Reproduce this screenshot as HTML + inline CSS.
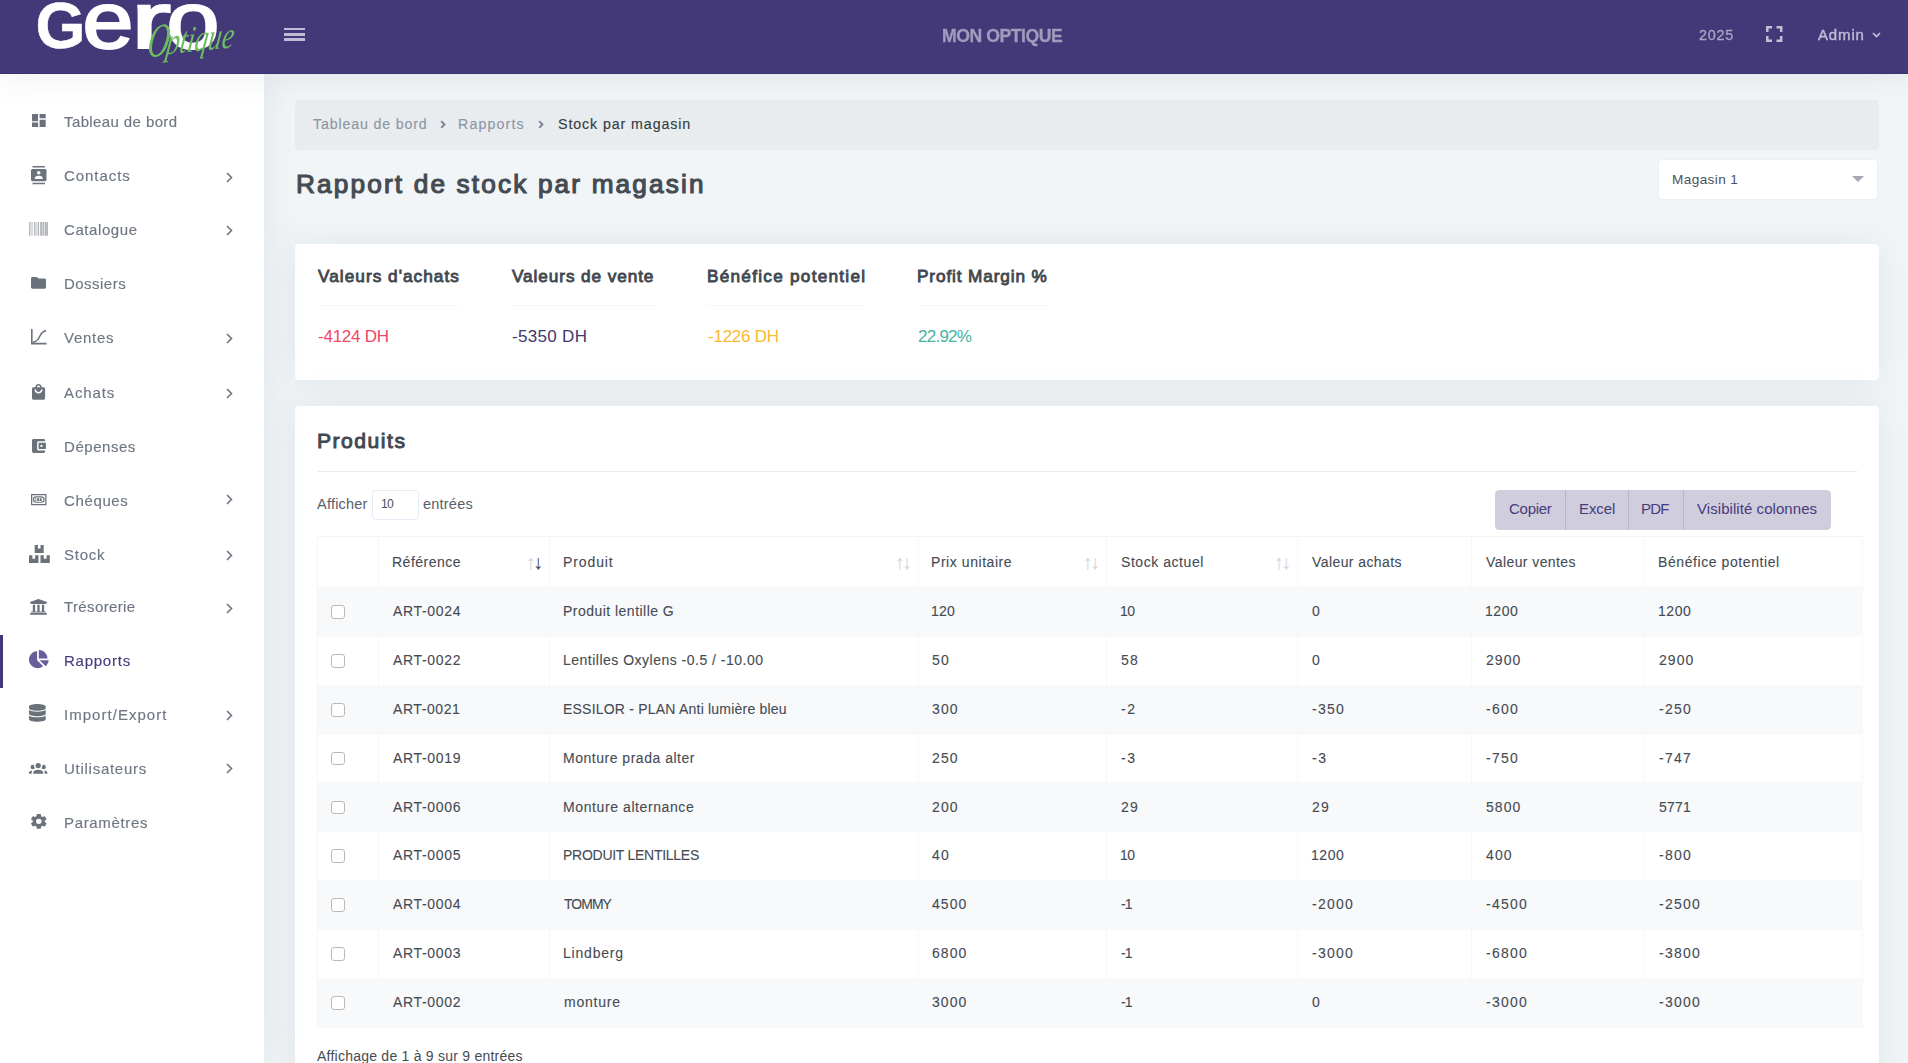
<!DOCTYPE html>
<html lang="fr"><head><meta charset="utf-8"><title>Rapport de stock par magasin</title>
<style>
*{box-sizing:border-box}
html,body{margin:0;padding:0}
body{width:1908px;height:1063px;overflow:hidden;background:#f1f5f7;font-family:"Liberation Sans",sans-serif;color:#495057;position:relative}
span{white-space:pre}
.t{display:inline-block;transform:scale(1.0005);transform-origin:0 50%}
header{will-change:transform;position:absolute;left:0;top:0;width:1908px;height:73.7px;background:#433878;z-index:5;box-shadow:0 0 35px 0 rgba(154,161,171,.2);border-bottom:1px solid #3c3172}
header .logo{position:absolute;left:0;top:0;width:264px;height:73px}
header .burger{position:absolute;left:284px;top:27.6px;width:21px;height:15px}
header .burger i{position:absolute;left:0;width:21px;height:2.6px;background:#c0bcd6}
header .brand{position:absolute;left:943.4px;top:0;height:73px;line-height:73px;color:#a19bbc}
header .year{position:absolute;left:1699.4px;top:0;line-height:70px;color:#aaa5c3}
header .fs{position:absolute;left:1766px;top:26px;width:16.5px;height:16px}
header .user{position:absolute;left:1818.3px;top:0;line-height:70.5px;color:#c0bbd5}
header .caret{position:absolute;left:1871.5px;top:31.5px;width:9px;height:6px}
aside{will-change:transform;position:absolute;left:0;top:73.4px;width:264px;height:990px;background:#fff;box-shadow:0 0 35px 0 rgba(154,161,171,.2);z-index:4}
aside ul{list-style:none;margin:0;padding:21.6px 0 0 0}
aside li{position:relative;height:53.94px;line-height:53.94px;color:#6e7683;-webkit-text-stroke:.15px}
aside li .ic{position:absolute;fill:#6c727b;overflow:visible}
aside li .lb{position:absolute;left:63.5px;top:.3px}
aside li .ch{position:absolute;left:225.5px;top:22px;width:7px;height:11px}
aside li.active{color:#463b7d}
aside li.active:before{content:"";position:absolute;left:0;top:1.4px;width:3.2px;height:52.8px;background:#433878}
aside li.active .ic{fill:#695e9c}
main{position:absolute;left:264px;top:73.4px;width:1644px;height:990px}
.crumb{position:absolute;left:31px;top:26.6px;width:1584px;height:50px;background:#e9ecef;border-radius:4px;line-height:48.6px;color:#8d97a3;-webkit-text-stroke:.15px}
.crumb>span{position:absolute;top:.5px}
.crumb .cur{color:#363c43}
.crumb svg{position:absolute;top:20.3px;width:6px;height:9px}
h1{position:absolute;left:34px;top:84.4px;margin:0;line-height:48px;color:#454b52;font-weight:normal}
.sel{position:absolute;left:1394px;top:86px;width:219.5px;height:40.4px;background:#fff;border:1px solid #ebf0f6;border-radius:4px;line-height:38px;color:#4b525a}
.sel>span{position:absolute;left:13.7px;top:-.8px}
.sel i{position:absolute;left:193.3px;top:15.6px;border-left:6px solid transparent;border-right:6px solid transparent;border-top:6.4px solid #a5a9b4}
.card{position:absolute;left:31px;width:1584px;background:#fff;border-radius:4px;box-shadow:0 0 35px 0 rgba(154,161,171,.17)}
.stats{top:170.6px;height:135.6px}
.stat{position:absolute;top:0}
.stat h5{position:absolute;left:0;top:14.2px;margin:0;padding-bottom:0;line-height:36px;height:47.9px;border-bottom:1px solid #f5f6f9;color:#42484f;font-weight:normal}
.stat p{position:absolute;left:0;top:77px;margin:0;line-height:32px}
.prod{top:332.6px;height:700px}
.prod h4{position:absolute;left:22.6px;top:14.9px;margin:0;line-height:40px;color:#42484f;font-weight:normal}
.prod hr{position:absolute;left:22.6px;top:65.2px;width:1539.4px;height:1px;border:0;margin:0;background:#e6e9ed}
.len{position:absolute;left:22.3px;top:83.3px;line-height:29px;color:#59606a}
.len b{position:absolute;left:54.9px;top:.7px;width:46.8px;height:30px;border:1px solid #e5ecf6;border-radius:3.5px;font-weight:normal;line-height:24px;color:#4b525a;background:#fff}
.len b>span{position:absolute;left:7.9px;top:0}
.len .e{position:absolute;left:105.9px;top:0}
.btns{position:absolute;left:1200.2px;top:83.7px;height:39.9px;width:335.8px;border-radius:4.4px;overflow:hidden;background:#d0cddd;color:#463b7d}
.btns a{position:absolute;top:0;height:39.9px;line-height:38.6px;border-left:1px solid #b9b4cf}
.btns a:first-child{border-left:0}
.btns a>span{position:absolute;top:.7px}
table{position:absolute;left:22px;top:130.4px;width:1546px;border-collapse:separate;border-spacing:0;table-layout:fixed;color:#454b53;-webkit-text-stroke:.1px;border-left:1px solid #f3f5f8;border-bottom:1px solid #f3f5f8}
th,td{padding:0 0 0 13.8px;text-align:left;font-weight:normal;border-right:1px solid #f6f7fa;border-top:1px solid #f8f9fa;position:relative;overflow:hidden;white-space:nowrap;vertical-align:top}
th{height:50.6px;line-height:20px;padding-top:14.85px;color:#454b53;border-bottom:1.5px solid #f8f9fa;border-top-color:#f1f3f7}
td{height:48.85px;line-height:20px;padding-top:13.15px}
tbody tr:nth-child(5) td{padding-top:14.1px}
tbody tr:nth-child(odd) td{background:#f8f9fa;border-right-color:#f6f7f9}
.cb{position:absolute;left:13px;top:17.2px;width:13.8px;height:13.7px;border:1px solid #b9b9b9;border-radius:3px;background:#fff}
.so{position:absolute;right:8.2px;top:15px;color:#d3d6da;letter-spacing:-2.6px;font-size:19.8px}
.so em{font-style:normal;color:#3f464d}
.info{position:absolute;left:22.3px;top:634.6px;line-height:30px;color:#454b53}
</style></head>
<body>
<header>
<div class="logo"><svg width="264" height="73" viewBox="0 0 264 73"><text y="47.600" font-family="Liberation Sans, sans-serif" fill="#fff" stroke="#fff"><tspan x="35.500" font-size="64" font-weight="700" stroke-width=".5" textLength="50" lengthAdjust="spacingAndGlyphs">G</tspan><tspan x="82.500" font-size="80.500" stroke-width="2.200" textLength="51" lengthAdjust="spacingAndGlyphs">e</tspan><tspan x="131" font-size="80.500" stroke-width="2.200" textLength="40" lengthAdjust="spacingAndGlyphs">r</tspan><tspan x="166.500" font-size="80.500" stroke-width="2.200" textLength="53" lengthAdjust="spacingAndGlyphs">o</tspan></text><text y="0" font-family="Liberation Serif, serif" font-style="italic" fill="#6cbd60" transform="translate(146 57.500) rotate(-6) skewX(-14)"><tspan x="0" font-size="47" textLength="22" lengthAdjust="spacingAndGlyphs">O</tspan><tspan x="19" dy="-1" font-size="37" textLength="68" lengthAdjust="spacingAndGlyphs">ptique</tspan></text></svg></div>
<div class="burger"><i style="top:0"></i><i style="top:5.400px"></i><i style="top:10.700px"></i></div>
<div class="brand"><span class="t" style="font-size:17.6px;font-weight:700;letter-spacing:-0.438px;margin-left:-1.00px;-webkit-text-stroke:.3px #a19bbc;">MON OPTIQUE</span></div>
<div class="year"><span class="t" style="font-size:14.4px;letter-spacing:0.730px;-webkit-text-stroke:.3px #aaa5c3;">2025</span></div>
<svg class="fs" viewBox="0 0 16.500 16"><path d="M1.300 6V1.300H6M10.500 1.300h4.700V6M15.200 10v4.700h-4.700M6 14.700H1.300V10" fill="none" stroke="#c3bfd6" stroke-width="2.500"/></svg>
<div class="user"><span class="t" style="font-size:15px;letter-spacing:0.856px;-webkit-text-stroke:.4px #c0bbd5;">Admin</span></div>
<svg class="caret" viewBox="0 0 9 6"><path d="M1 1l3.500 3.500L8 1" fill="none" stroke="#c6c2d9" stroke-width="1.600"/></svg>
</header>
<aside><ul>
<li><svg class="ic" viewBox="3.000 3.000 18.000 18.000" preserveAspectRatio="none" style="left:31.70px;top:19.90px;width:13.70px;height:12.90px"><path d="M3 13h8V3H3v10zm0 8h8v-6H3v6zm10 0h8V11h-8v10zm0-18v6h8V3h-8z"/></svg><span class="lb"><span class="t" style="font-size:15px;letter-spacing:0.390px;">Tableau de bord</span></span></li>
<li><svg class="ic" viewBox="2.000 0.000 20.000 24.000" preserveAspectRatio="none" style="left:30.80px;top:17.96px;width:15.50px;height:18.20px"><path d="M20 0H4v2h16V0zM4 24h16v-2H4v2zM20 4H4c-1.1 0-2 .9-2 2v12c0 1.1.9 2 2 2h16c1.1 0 2-.9 2-2V6c0-1.1-.9-2-2-2zm-8 2.75c1.24 0 2.25 1.01 2.25 2.25s-1.01 2.25-2.25 2.25S9.75 10.24 9.75 9 10.76 6.75 12 6.75zM17 17H7v-1.5c0-1.67 3.33-2.5 5-2.5s5 .83 5 2.5V17z"/></svg><span class="lb" style="top:0.9px"><span class="t" style="font-size:15px;letter-spacing:0.929px;">Contacts</span></span><svg class="ch" style="top:23.1px" viewBox="0 0 7 11"><path d="M1 1l4.500 4.500L1 10" fill="none" stroke="#6e7683" stroke-width="1.600"/></svg></li>
<li><svg class="ic" viewBox="0.000 64.000 512.000 384.000" preserveAspectRatio="none" style="left:29.10px;top:19.22px;width:18.90px;height:13.70px"><path opacity=".75" d="M0 448V64h18v384H0zm26.857-.273V64H36v383.727h-9.143zm27.143 0V64h8.857v383.727H54zm44.857 0V64h8.857v383.727h-8.857zm36 0V64h17.714v383.727h-17.714zm44.857 0V64h8.857v383.727h-8.857zm18 0V64h8.857v383.727h-8.857zm18 0V64h8.857v383.727h-8.857zm35.715 0V64h18v383.727h-18zm44.857 0V64h18v383.727h-18zm35.999 0V64h18.001v383.727h-18.001zm36.001 0V64h18.001v383.727h-18.001zm26.857 0V64h18v383.727h-18zm45.143 0V64h26.857v383.727h-26.857zm35.714 0V64h9.143v383.727H476zm18 .273V64h18v384h-18z"/></svg><span class="lb"><span class="t" style="font-size:15px;letter-spacing:0.582px;">Catalogue</span></span><svg class="ch" style="top:22.5px" viewBox="0 0 7 11"><path d="M1 1l4.500 4.500L1 10" fill="none" stroke="#6e7683" stroke-width="1.600"/></svg></li>
<li><svg class="ic" viewBox="2.000 4.000 20.000 16.000" preserveAspectRatio="none" style="left:31.00px;top:20.58px;width:15.00px;height:11.70px"><path d="M10 4H4c-1.1 0-1.99.9-1.99 2L2 18c0 1.1.9 2 2 2h16c1.1 0 2-.9 2-2V8c0-1.1-.9-2-2-2h-8l-2-2z"/></svg><span class="lb"><span class="t" style="font-size:15px;letter-spacing:0.465px;">Dossiers</span></span></li>
<li><svg class="ic" viewBox="-1.200 0.000 21.200 21.200" preserveAspectRatio="none" style="left:30.80px;top:18.74px;width:15.50px;height:15.40px"><path d="M1 0v19h19v2.200H-1.200V0z"/><path d="M1 18.200c5.500-.300 7.500-3.200 9.500-7.500s4-7.700 9-8.700" fill="none" stroke="#6c727b" stroke-width="2.100"/></svg><span class="lb"><span class="t" style="font-size:15px;letter-spacing:0.726px;">Ventes</span></span><svg class="ch" style="top:22.5px" viewBox="0 0 7 11"><path d="M1 1l4.500 4.500L1 10" fill="none" stroke="#6e7683" stroke-width="1.600"/></svg></li>
<li><svg class="ic" viewBox="4.000 2.000 16.000 20.000" preserveAspectRatio="none" style="left:32.00px;top:19.30px;width:13.10px;height:15.80px"><path d="M18 6h-2c0-2.210-1.790-4-4-4S8 3.790 8 6H6c-1.100 0-2 .900-2 2v12c0 1.100.900 2 2 2h12c1.100 0 2-.900 2-2V8c0-1.100-.900-2-2-2zm-6-2c1.100 0 2 .900 2 2h-4c0-1.100.900-2 2-2zm0 10c-2.760 0-5-2.240-5-5h2c0 1.660 1.340 3 3 3s3-1.340 3-3h2c0 2.760-2.240 5-5 5z"/></svg><span class="lb" style="top:1.5px"><span class="t" style="font-size:15px;letter-spacing:0.889px;">Achats</span></span><svg class="ch" style="top:23.7px" viewBox="0 0 7 11"><path d="M1 1l4.500 4.500L1 10" fill="none" stroke="#6e7683" stroke-width="1.600"/></svg></li>
<li><svg class="ic" viewBox="3.000 3.000 19.000 18.000" preserveAspectRatio="none" style="left:32.00px;top:20.36px;width:13.90px;height:13.90px"><path d="M21 18v1c0 1.100-.900 2-2 2H5c-1.110 0-2-.900-2-2V5c0-1.100.890-2 2-2h14c1.100 0 2 .900 2 2v1h-9c-1.110 0-2 .900-2 2v8c0 1.100.890 2 2 2h9zm-9-2h10V8H12v8zm4-2.500c-.830 0-1.500-.670-1.500-1.500s.670-1.500 1.500-1.500 1.500.670 1.500 1.500-.670 1.500-1.500 1.500z"/></svg><span class="lb" style="top:2.1px"><span class="t" style="font-size:15px;letter-spacing:0.537px;">Dépenses</span></span></li>
<li><svg class="ic" viewBox="0.000 0.000 24.000 17.400" preserveAspectRatio="none" style="left:30.80px;top:22.12px;width:15.50px;height:11.20px"><path fill-rule="evenodd" d="M0 0h24v17.400H0zM2 2v13.400h20V2z"/><path fill-rule="evenodd" d="M8 3.600h8a5.100 5.100 0 0 1 0 10.200H8A5.100 5.100 0 0 1 8 3.600zM8 5.400a3.300 3.300 0 0 0 0 6.600h8a3.300 3.300 0 0 0 0-6.600z"/><path d="M6.800 6.600h1.500v4.200H6.800zM9.600 6.600h3v4.200h-3zM13.600 6.600h3v4.200h-3z"/></svg><span class="lb" style="top:1.6px"><span class="t" style="font-size:15px;letter-spacing:0.626px;">Chéques</span></span><svg class="ch" style="top:22.3px" viewBox="0 0 7 11"><path d="M1 1l4.500 4.500L1 10" fill="none" stroke="#6e7683" stroke-width="1.600"/></svg></li>
<li><svg class="ic" viewBox="0.000 0.000 20.800 18.000" preserveAspectRatio="none" style="left:29.30px;top:18.48px;width:20.80px;height:18.00px"><path d="M5.700 0h3.200v3.600h2.600V0h3.200v8H5.700zM0 10.200h3.400v3.500h2.700v-3.500h3.400V18H0zM11.500 10.200h3.300v3.500h2.700v-3.500h3.300V18h-9.300z"/></svg><span class="lb" style="top:1.6px"><span class="t" style="font-size:15px;letter-spacing:0.771px;">Stock</span></span><svg class="ch" style="top:24.1px" viewBox="0 0 7 11"><path d="M1 1l4.500 4.500L1 10" fill="none" stroke="#6e7683" stroke-width="1.600"/></svg></li>
<li><svg class="ic" viewBox="16.000 32.000 480.000 448.000" preserveAspectRatio="none" style="left:30.10px;top:18.64px;width:17.00px;height:15.80px"><path d="M496 128v16a8 8 0 0 1-8 8h-24v12c0 6.627-5.373 12-12 12H60c-6.627 0-12-5.373-12-12v-12H24a8 8 0 0 1-8-8v-16a8 8 0 0 1 4.941-7.392l232-88a7.996 7.996 0 0 1 6.118 0l232 88A8 8 0 0 1 496 128zm-24 304H40c-13.255 0-24 10.745-24 24v16a8 8 0 0 0 8 8h464a8 8 0 0 0 8-8v-16c0-13.255-10.745-24-24-24zM96 192v192H60c-6.627 0-12 5.373-12 12v20h416v-20c0-6.627-5.373-12-12-12h-36V192h-64v192h-64V192h-64v192h-64V192H96z"/></svg><span class="lb"><span class="t" style="font-size:15px;letter-spacing:0.372px;">Trésorerie</span></span><svg class="ch" style="top:22.5px" viewBox="0 0 7 11"><path d="M1 1l4.500 4.500L1 10" fill="none" stroke="#6e7683" stroke-width="1.600"/></svg></li>
<li class="active"><svg class="ic" viewBox="-0.002 0.004 544.002 511.994" preserveAspectRatio="none" style="left:29.40px;top:16.50px;width:19.70px;height:18.20px"><path d="M527.790 288H290.500l158.030 158.030c6.040 6.040 15.980 6.530 22.190.680 38.700-36.460 65.320-85.610 73.130-140.860 1.340-9.460-6.510-17.850-16.060-17.850zm-15.830-64.800C503.720 103.740 408.260 8.280 288.800.040 279.680-.590 272 7.100 272 16.240V240h223.770c9.140 0 16.820-7.680 16.190-16.800zM224 288V50.710c0-9.550-8.390-17.400-17.840-16.060C86.990 51.490-4.100 155.600.140 280.370 4.500 408.510 114.830 513.590 243.030 511.980c50.400-.630 96.970-16.870 135.260-44.030 7.900-5.600 8.420-17.230 1.570-24.080L224 288z"/></svg><span class="lb"><span class="t" style="font-size:15px;letter-spacing:0.748px;">Rapports</span></span></li>
<li><svg class="ic" viewBox="0.000 0.000 448.000 512.000" preserveAspectRatio="none" style="left:29.00px;top:16.46px;width:16.70px;height:17.80px"><path d="M448 73.143v45.714C448 159.143 347.667 192 224 192S0 159.143 0 118.857V73.143C0 32.857 100.333 0 224 0s224 32.857 224 73.143zM448 176v102.857C448 319.143 347.667 352 224 352S0 319.143 0 278.857V176c48.125 33.143 136.208 48.572 224 48.572S399.874 209.143 448 176zm0 160v102.857C448 479.143 347.667 512 224 512S0 479.143 0 438.857V336c48.125 33.143 136.208 48.572 224 48.572S399.874 369.143 448 336z"/></svg><span class="lb"><span class="t" style="font-size:15px;letter-spacing:1.028px;">Import/Export</span></span><svg class="ch" style="top:22.5px" viewBox="0 0 7 11"><path d="M1 1l4.500 4.500L1 10" fill="none" stroke="#6e7683" stroke-width="1.600"/></svg></li>
<li><svg class="ic" viewBox="0.000 5.500 24.000 14.500" preserveAspectRatio="none" style="left:29.40px;top:20.72px;width:18.40px;height:10.70px"><path d="M12 5.500A3.500 3.500 0 0 1 15.500 9a3.500 3.500 0 0 1-3.500 3.500A3.500 3.500 0 0 1 8.500 9 3.500 3.500 0 0 1 12 5.500M5 8c.560 0 1.080.150 1.530.420-.150 1.430.270 2.850 1.130 3.960C7.160 13.340 6.160 14 5 14a3 3 0 0 1-3-3 3 3 0 0 1 3-3m14 0a3 3 0 0 1 3 3 3 3 0 0 1-3 3c-1.160 0-2.160-.660-2.660-1.620a5.536 5.536 0 0 0 1.130-3.960c.450-.270.970-.420 1.530-.420M5.500 18.250c0-2.070 2.910-3.750 6.500-3.750s6.500 1.680 6.500 3.750V20h-13v-1.750M0 20v-1.500c0-1.390 1.890-2.560 4.450-2.900-.590.680-.950 1.620-.950 2.650V20H0m24 0h-3.500v-1.750c0-1.030-.360-1.970-.950-2.650 2.560.340 4.450 1.510 4.450 2.900V20z"/></svg><span class="lb"><span class="t" style="font-size:15px;letter-spacing:0.728px;">Utilisateurs</span></span><svg class="ch" style="top:21.4px" viewBox="0 0 7 11"><path d="M1 1l4.500 4.500L1 10" fill="none" stroke="#6e7683" stroke-width="1.600"/></svg></li>
<li><svg class="ic" viewBox="2.271 2.000 19.454 20.000" preserveAspectRatio="none" style="left:30.70px;top:18.38px;width:15.60px;height:14.70px"><path d="M12 15.500A3.500 3.500 0 0 1 8.500 12 3.500 3.500 0 0 1 12 8.500a3.500 3.500 0 0 1 3.500 3.500 3.500 3.500 0 0 1-3.500 3.500m7.430-2.530c.040-.320.070-.640.070-.970 0-.330-.030-.660-.070-1l2.110-1.630c.190-.150.240-.420.120-.640l-2-3.460c-.120-.220-.390-.310-.610-.220l-2.490 1c-.520-.390-1.060-.730-1.690-.980l-.370-2.650A.506.506 0 0 0 14 2h-4c-.250 0-.460.180-.500.420l-.370 2.650c-.630.250-1.170.590-1.690.980l-2.490-1c-.220-.090-.490 0-.610.220l-2 3.460c-.130.220-.070.490.120.640L4.570 11c-.040.340-.070.670-.070 1 0 .330.030.650.070.970l-2.110 1.660c-.190.150-.250.420-.120.640l2 3.460c.120.220.390.300.610.220l2.490-1.010c.520.400 1.060.740 1.690.990l.370 2.650c.040.240.250.420.500.420h4c.250 0 .460-.180.500-.420l.370-2.650c.630-.260 1.170-.590 1.690-.990l2.490 1.010c.220.080.490 0 .610-.220l2-3.460c.120-.220.070-.490-.120-.640l-2.110-1.660z"/></svg><span class="lb"><span class="t" style="font-size:15px;letter-spacing:0.653px;">Paramètres</span></span></li>
</ul></aside>
<main>
<nav class="crumb"><span style="left:17.600px"><span class="t" style="font-size:14.2px;letter-spacing:0.852px;">Tableau de bord</span></span><svg viewBox="0 0 6 9" style="left:144.7px"><path d="M1.200 1.100l3.300 3.400L1.200 7.900" fill="none" stroke="#7b8391" stroke-width="1.900"/></svg><span style="left:164.300px"><span class="t" style="font-size:14.2px;letter-spacing:1.147px;margin-left:-1.00px;">Rapports</span></span><svg viewBox="0 0 6 9" style="left:242.9px"><path d="M1.200 1.100l3.300 3.400L1.200 7.900" fill="none" stroke="#7b8391" stroke-width="1.900"/></svg><span class="cur" style="left:262.900px"><span class="t" style="font-size:14.2px;letter-spacing:0.918px;">Stock par magasin</span></span></nav>
<h1><span class="t" style="font-size:26.2px;letter-spacing:2.149px;margin-left:-2.00px;-webkit-text-stroke:1.15px #454b52;">Rapport de stock par magasin</span></h1>
<div class="sel"><span><span class="t" style="font-size:13.6px;letter-spacing:0.393px;margin-left:-1.00px;">Magasin 1</span></span><i></i></div>
<section class="card stats">
<div class="stat" style="left:22.6px"><h5><span class="t" style="font-size:17.2px;letter-spacing:1.036px;-webkit-text-stroke:.85px #42484f;">Valeurs d'achats</span></h5><p style="color:#f04866"><span class="t" style="font-size:17px;letter-spacing:-0.240px;">-4124 DH</span></p></div>
<div class="stat" style="left:217.4px"><h5><span class="t" style="font-size:17.2px;letter-spacing:0.910px;-webkit-text-stroke:.85px #42484f;">Valeurs de vente</span></h5><p style="color:#40376f"><span class="t" style="font-size:17px;letter-spacing:0.303px;">-5350 DH</span></p></div>
<div class="stat" style="left:412.6px"><h5><span class="t" style="font-size:17.2px;letter-spacing:1.257px;margin-left:-1.00px;-webkit-text-stroke:.85px #42484f;">Bénéfice potentiel</span></h5><p style="color:#fbb92e"><span class="t" style="font-size:17px;letter-spacing:-0.240px;">-1226 DH</span></p></div>
<div class="stat" style="left:623px"><h5><span class="t" style="font-size:17.2px;letter-spacing:0.878px;margin-left:-1.00px;-webkit-text-stroke:.85px #42484f;">Profit Margin %</span></h5><p style="color:#45b3a1"><span class="t" style="font-size:17px;letter-spacing:-0.748px;">22.92%</span></p></div>
</section>
<section class="card prod">
<h4><span class="t" style="font-size:21.1px;letter-spacing:1.509px;margin-left:-1.00px;-webkit-text-stroke:.95px #42484f;">Produits</span></h4><hr>
<div class="len"><span class="t" style="font-size:14.5px;letter-spacing:0.219px;">Afficher</span><b><span><span class="t" style="font-size:12.2px;letter-spacing:-0.778px;">10</span></span></b><span class="e"><span class="t" style="font-size:14.5px;letter-spacing:0.214px;">entrées</span></span></div>
<div class="btns"><a style="left:0px;width:70.2px"><span style="left:13.8px"><span class="t" style="font-size:15px;letter-spacing:-0.278px;">Copier</span></span></a><a style="left:70.2px;width:63.1px"><span style="left:13.3px"><span class="t" style="font-size:15px;letter-spacing:-0.087px;margin-left:-1.00px;">Excel</span></span></a><a style="left:133.3px;width:54.8px"><span style="left:12.8px"><span class="t" style="font-size:15px;letter-spacing:-0.819px;margin-left:-1.00px;">PDF</span></span></a><a style="left:188.1px;width:147.7px"><span style="left:12.9px"><span class="t" style="font-size:15px;letter-spacing:0.058px;">Visibilité colonnes</span></span></a></div>
<table><colgroup><col style="width:60.9px"><col style="width:171px"><col style="width:368.8px"><col style="width:188.2px"><col style="width:191.2px"><col style="width:173.9px"><col style="width:172.9px"><col style="width:218.1px"></colgroup><thead><tr><th></th><th><span class="t" style="font-size:14px;letter-spacing:0.499px;margin-left:-1.00px;">Référence</span><span class="so">↑<em>↓</em></span></th><th><span class="t" style="font-size:14px;letter-spacing:0.889px;margin-left:-1.00px;">Produit</span><span class="so">↑↓</span></th><th><span class="t" style="font-size:14px;letter-spacing:0.556px;margin-left:-1.00px;">Prix unitaire</span><span class="so">↑↓</span></th><th><span class="t" style="font-size:14px;letter-spacing:0.550px;">Stock actuel</span><span class="so">↑↓</span></th><th><span class="t" style="font-size:14px;letter-spacing:0.411px;">Valeur achats</span></th><th><span class="t" style="font-size:14px;letter-spacing:0.411px;">Valeur ventes</span></th><th><span class="t" style="font-size:14px;letter-spacing:0.577px;margin-left:-1.00px;">Bénéfice potentiel</span></th></tr></thead>
<tbody>
<tr><td><i class="cb"></i></td><td><span class="t" style="font-size:14px;letter-spacing:0.658px;">ART-0024</span></td><td><span class="t" style="font-size:14px;letter-spacing:0.469px;margin-left:-1.00px;">Produit lentille G</span></td><td><span class="t" style="font-size:14px;letter-spacing:0.264px;margin-left:-1.00px;">120</span></td><td><span class="t" style="font-size:14px;letter-spacing:-0.536px;margin-left:-1.00px;">10</span></td><td><span class="t" style="font-size:14px;">0</span></td><td><span class="t" style="font-size:14px;letter-spacing:0.531px;margin-left:-1.00px;">1200</span></td><td><span class="t" style="font-size:14px;letter-spacing:0.531px;margin-left:-1.00px;">1200</span></td></tr>
<tr><td><i class="cb"></i></td><td><span class="t" style="font-size:14px;letter-spacing:0.658px;">ART-0022</span></td><td><span class="t" style="font-size:14px;letter-spacing:0.489px;margin-left:-1.00px;">Lentilles Oxylens -0.5 / -10.00</span></td><td><span class="t" style="font-size:14px;letter-spacing:1.114px;">50</span></td><td><span class="t" style="font-size:14px;letter-spacing:1.114px;">58</span></td><td><span class="t" style="font-size:14px;">0</span></td><td><span class="t" style="font-size:14px;letter-spacing:1.081px;">2900</span></td><td><span class="t" style="font-size:14px;letter-spacing:1.081px;">2900</span></td></tr>
<tr><td><i class="cb"></i></td><td><span class="t" style="font-size:14px;letter-spacing:0.572px;">ART-0021</span></td><td><span class="t" style="font-size:14px;letter-spacing:0.207px;margin-left:-1.00px;">ESSILOR - PLAN Anti lumière bleu</span></td><td><span class="t" style="font-size:14px;letter-spacing:1.089px;">300</span></td><td><span class="t" style="font-size:14px;letter-spacing:1.688px;">-2</span></td><td><span class="t" style="font-size:14px;letter-spacing:1.272px;">-350</span></td><td><span class="t" style="font-size:14px;letter-spacing:1.272px;">-600</span></td><td><span class="t" style="font-size:14px;letter-spacing:1.272px;">-250</span></td></tr>
<tr><td><i class="cb"></i></td><td><span class="t" style="font-size:14px;letter-spacing:0.658px;">ART-0019</span></td><td><span class="t" style="font-size:14px;letter-spacing:0.510px;margin-left:-1.00px;">Monture prada alter</span></td><td><span class="t" style="font-size:14px;letter-spacing:1.089px;">250</span></td><td><span class="t" style="font-size:14px;letter-spacing:1.688px;">-3</span></td><td><span class="t" style="font-size:14px;letter-spacing:1.688px;">-3</span></td><td><span class="t" style="font-size:14px;letter-spacing:1.272px;">-750</span></td><td><span class="t" style="font-size:14px;letter-spacing:1.272px;">-747</span></td></tr>
<tr><td><i class="cb"></i></td><td><span class="t" style="font-size:14px;letter-spacing:0.658px;">ART-0006</span></td><td><span class="t" style="font-size:14px;letter-spacing:0.592px;margin-left:-1.00px;">Monture alternance</span></td><td><span class="t" style="font-size:14px;letter-spacing:1.089px;">200</span></td><td><span class="t" style="font-size:14px;letter-spacing:1.114px;">29</span></td><td><span class="t" style="font-size:14px;letter-spacing:1.114px;">29</span></td><td><span class="t" style="font-size:14px;letter-spacing:1.081px;">5800</span></td><td><span class="t" style="font-size:14px;letter-spacing:0.197px;">5771</span></td></tr>
<tr><td><i class="cb"></i></td><td><span class="t" style="font-size:14px;letter-spacing:0.658px;">ART-0005</span></td><td><span class="t" style="font-size:14px;letter-spacing:-0.273px;margin-left:-1.00px;">PRODUIT LENTILLES</span></td><td><span class="t" style="font-size:14px;letter-spacing:1.114px;">40</span></td><td><span class="t" style="font-size:14px;letter-spacing:-0.536px;margin-left:-1.00px;">10</span></td><td><span class="t" style="font-size:14px;letter-spacing:0.531px;margin-left:-1.00px;">1200</span></td><td><span class="t" style="font-size:14px;letter-spacing:1.089px;">400</span></td><td><span class="t" style="font-size:14px;letter-spacing:1.272px;">-800</span></td></tr>
<tr><td><i class="cb"></i></td><td><span class="t" style="font-size:14px;letter-spacing:0.658px;">ART-0004</span></td><td><span class="t" style="font-size:14px;letter-spacing:-0.978px;">TOMMY</span></td><td><span class="t" style="font-size:14px;letter-spacing:1.081px;">4500</span></td><td><span class="t" style="font-size:14px;letter-spacing:-0.962px;">-1</span></td><td><span class="t" style="font-size:14px;letter-spacing:1.220px;">-2000</span></td><td><span class="t" style="font-size:14px;letter-spacing:1.220px;">-4500</span></td><td><span class="t" style="font-size:14px;letter-spacing:1.220px;">-2500</span></td></tr>
<tr><td><i class="cb"></i></td><td><span class="t" style="font-size:14px;letter-spacing:0.658px;">ART-0003</span></td><td><span class="t" style="font-size:14px;letter-spacing:0.800px;margin-left:-1.00px;">Lindberg</span></td><td><span class="t" style="font-size:14px;letter-spacing:1.081px;">6800</span></td><td><span class="t" style="font-size:14px;letter-spacing:-0.962px;">-1</span></td><td><span class="t" style="font-size:14px;letter-spacing:1.220px;">-3000</span></td><td><span class="t" style="font-size:14px;letter-spacing:1.220px;">-6800</span></td><td><span class="t" style="font-size:14px;letter-spacing:1.220px;">-3800</span></td></tr>
<tr><td><i class="cb"></i></td><td><span class="t" style="font-size:14px;letter-spacing:0.658px;">ART-0002</span></td><td><span class="t" style="font-size:14px;letter-spacing:0.771px;">monture</span></td><td><span class="t" style="font-size:14px;letter-spacing:1.081px;">3000</span></td><td><span class="t" style="font-size:14px;letter-spacing:-0.962px;">-1</span></td><td><span class="t" style="font-size:14px;">0</span></td><td><span class="t" style="font-size:14px;letter-spacing:1.220px;">-3000</span></td><td><span class="t" style="font-size:14px;letter-spacing:1.220px;">-3000</span></td></tr>
</tbody></table>
<div class="info"><span class="t" style="font-size:14px;letter-spacing:0.232px;">Affichage de 1 à 9 sur 9 entrées</span></div>
</section>
</main>
</body></html>
